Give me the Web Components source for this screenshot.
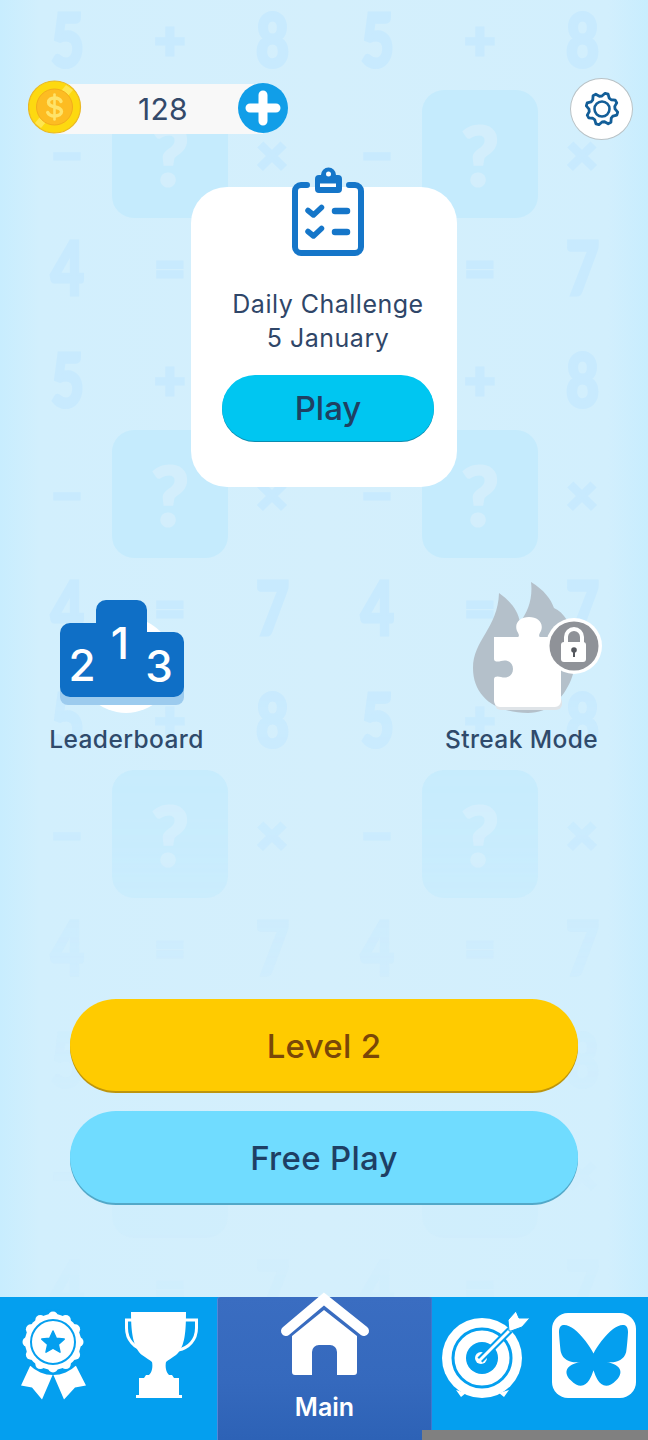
<!DOCTYPE html>
<html lang="en">
<head>
<meta charset="utf-8">
<title>Main</title>
<style>
  html, body { margin: 0; padding: 0; }
  body { width: 648px; height: 1440px; overflow: hidden; font-family: Inter, "Liberation Sans", sans-serif; }
</style>
</head>
<body>
<game-screen>
  <math-backdrop slot="backdrop"></math-backdrop>

  <top-bar>
    <coin-counter value="128"></coin-counter>
    <settings-button></settings-button>
  </top-bar>

  <daily-card title-text="Daily Challenge" date-text="5 January" action="Play">
    <svg width="76" height="92" viewBox="290 166 76 92" fill="none">
      <path d="M307 185h-6a6 6 0 0 0-6 6v56a6 6 0 0 0 6 6h54a6 6 0 0 0 6-6v-56a6 6 0 0 0-6-6h-6" stroke="#1576c9" stroke-width="6" stroke-linecap="round"/>
      <path d="M319 175a4 4 0 0 0-4 4v10a4 4 0 0 0 4 4h19a4 4 0 0 0 4-4v-10a4 4 0 0 0-4-4h-2a7.500 7.500 0 0 0-15 0z" fill="#1576c9"/>
      <circle cx="328.500" cy="174" r="2.500" fill="#fff"/>
      <rect x="320" y="183.500" width="16" height="3.500" fill="#fff"/>
      <path d="M308 210.500l5.500 4.500 8-7.500M308 231.500l5.500 4.500 8-7.500" stroke="#1576c9" stroke-width="5.500" stroke-linecap="round" stroke-linejoin="round"/>
      <path d="M335 211h12M335 232h12" stroke="#1576c9" stroke-width="6.500" stroke-linecap="round"/>
    </svg>
  </daily-card>

  <mode-row>
    <mode-tile label="Leaderboard">
      <svg width="154" height="135" viewBox="50 582 154 135" fill="none" style="overflow:visible">
        <circle cx="126" cy="665" r="48" fill="#fff"/>
        <rect x="60" y="680" width="124" height="25" rx="8" fill="#9ccbee"/>
        <path d="M60 633a10 10 0 0 1 10-10h26v-13a10 10 0 0 1 10-10h31a10 10 0 0 1 10 10v22h27a10 10 0 0 1 10 10v45a10 10 0 0 1-10 10H70a10 10 0 0 1-10-10z" fill="#0f6fc6"/>
        <text x="82" y="681" text-anchor="middle" font-family="Inter" font-size="44" font-weight="500" fill="#fff">2</text>
        <text x="120" y="659" text-anchor="middle" font-family="Inter" font-size="44" font-weight="500" fill="#fff">1</text>
        <text x="159" y="682" text-anchor="middle" font-family="Inter" font-size="44" font-weight="500" fill="#fff">3</text>
      </svg>
    </mode-tile>
    <mode-tile label="Streak Mode">
      <svg width="154" height="135" viewBox="444 582 154 135" fill="none" style="overflow:visible">
        <path d="M527 713C495 713 472 697 472 668C472 640 497 628 498 593C512 603 517 612 519 622C527 612 532 598 530 582C543 590 550 599 553 608C558 610 562 614 566 620C574 640 578 660 570 680C562 699 548 713 527 713Z" fill="#b4c0ca"/>
        <rect x="494" y="696" width="67" height="14" rx="6" fill="#dfe4e8"/>
        <path d="M493 637h23c3 0 2-3 0-6c-3-8 3-14 12-14s15 6 12 14c-2 3-3 6 0 6h20v64a6 6 0 0 1-6 6h-55a6 6 0 0 1-6-6V679c0-3 4-3 7-2c6 2 12-1 12-8s-6-10-12-8c-3 1-7 1-7-2z" fill="#fff"/>
        <circle cx="573" cy="646" r="28" fill="#fff"/>
        <circle cx="573" cy="646" r="24.500" fill="#8f9298"/>
        <path d="M565 643v-6a8 8 0 0 1 16 0v6" stroke="#fff" stroke-width="4"/>
        <rect x="560" y="642" width="25" height="20" rx="3" fill="#fff"/>
        <circle cx="573" cy="650" r="2.800" fill="#55585e"/>
        <rect x="572" y="650" width="2" height="7" fill="#55585e"/>
      </svg>
    </mode-tile>
  </mode-row>

  <button-stack>
    <pill-button tone="level">Level 2</pill-button>
    <pill-button tone="free">Free Play</pill-button>
  </button-stack>

  <nav-bar>
    <nav-tab>
      <svg width="108" height="143" viewBox="0 1297 108 143" fill="none">
        <path d="M31 1364L21 1385.500L32 1387.500L42 1399.500L53 1374zM75 1364L86 1385.500L75 1387.500L64 1399.500L53 1374z" fill="#fff"/>
        <circle cx="53" cy="1342" r="33" fill="#049fef"/>
        <g fill="#fff">
          <circle cx="53" cy="1342" r="28"/>
          <circle cx="53" cy="1316.500" r="5"/><circle cx="65.800" cy="1320" r="5"/><circle cx="75.100" cy="1329.300" r="5"/>
          <circle cx="78.500" cy="1342" r="5"/><circle cx="75.100" cy="1354.800" r="5"/><circle cx="65.800" cy="1364.100" r="5"/>
          <circle cx="53" cy="1367.500" r="5"/><circle cx="40.300" cy="1364.100" r="5"/><circle cx="30.900" cy="1354.800" r="5"/>
          <circle cx="27.500" cy="1342" r="5"/><circle cx="30.900" cy="1329.300" r="5"/><circle cx="40.300" cy="1320" r="5"/>
        </g>
        <circle cx="53" cy="1342" r="22" stroke="#049fef" stroke-width="2"/>
        <path d="M53 1331l3.300 7.300 7.900.8-5.900 5.300 1.700 7.800-7-4-7 4 1.700-7.800-5.900-5.300 7.900-.8z" fill="#049fef" stroke="#049fef" stroke-width="1.500" stroke-linejoin="round"/>
      </svg>
    </nav-tab>
    <nav-tab>
      <svg width="109" height="143" viewBox="108 1297 109 143" fill="none">
        <path d="M139 1320h-12.500v8c0 12 8 20 18 22M185 1320h11.500v8c0 12-8 20-18 22" stroke="#fff" stroke-width="3"/>
        <path d="M138 1312h48c0 24-2 36-10 43c-4 3-8 5-10 7c-1 5 0 10 3 13h3l2 3h5v17h3v3h-46v-3h3v-17h5l2-3h3c3-3 4-8 3-13c-2-2-6-4-10-7c-8-7-11-19-11-43z" fill="#fff"/>
      </svg>
    </nav-tab>
    <nav-tab active label="Main">
      <svg width="215" height="90" viewBox="217 1290 215 90" fill="none" style="overflow:visible">
        <path d="M292 1336L324 1310L357 1336V1372a3 3 0 0 1-3 3H337V1352a7 7 0 0 0-7-7H319a7 7 0 0 0-7 7V1375H295a3 3 0 0 1-3-3z" fill="#fff"/>
        <path d="M286 1331L324 1299L364 1331" stroke="#fff" stroke-width="10" stroke-linecap="round" stroke-linejoin="miter"/>
      </svg>
    </nav-tab>
    <nav-tab>
      <svg width="108" height="143" viewBox="432 1297 108 143" fill="none">
        <path d="M456 1390l5 7 5-4zM509 1390l-5 7-5-4z" fill="#fff"/>
        <circle cx="482" cy="1358" r="40" fill="#fff"/>
        <circle cx="482" cy="1358" r="29" stroke="#049fef" stroke-width="3"/>
        <circle cx="482" cy="1358" r="16" fill="#049fef"/>
        <circle cx="481" cy="1358" r="6" fill="#fff"/>
        <path d="M480 1360L510 1330" stroke="#049fef" stroke-width="7"/>
        <path d="M480 1360L511 1329" stroke="#fff" stroke-width="3" stroke-linecap="round"/>
        <path d="M509 1331L508 1320L516 1311L519 1318L530 1318L522 1327L511 1331z" fill="#fff" stroke="#049fef" stroke-width="1"/>
      </svg>
    </nav-tab>
    <nav-tab>
      <svg width="108" height="143" viewBox="540 1297 108 143" fill="none">
        <rect x="552" y="1313" width="84" height="85" rx="16" fill="#fff"/>
        <g transform="translate(559 1325) scale(0.1215)">
          <path d="M123.121 33.664C188.241 82.553 258.281 181.68 284 234.873c25.719-53.192 95.759-152.32 160.879-201.21C491.866-1.611 568-28.906 568 57.947c0 17.346-9.945 145.713-15.778 166.555-20.275 72.453-94.155 90.933-159.875 79.748C507.222 323.8 536.444 388.56 473.333 453.32c-119.86 122.992-172.272-30.859-185.702-70.281-2.462-7.227-3.614-10.608-3.631-7.733-.017-2.875-1.169.506-3.631 7.733-13.43 39.422-65.842 193.273-185.702 70.281-63.111-64.76-33.89-129.52 80.986-149.071-65.72 11.185-139.6-7.295-159.875-79.748C9.945 203.659 0 75.291 0 57.946 0-28.906 76.135-1.612 123.121 33.664Z" fill="#049fef"/>
        </g>
      </svg>
    </nav-tab>
  </nav-bar>
</game-screen>

<script>
// screen frame, everything stacks in a column
class GameScreen extends HTMLElement {
  constructor() {
    super();
    this.attachShadow({ mode: 'open' });
    this.shadowRoot.innerHTML = `
      <style>
        :host {
          display: flex;
          flex-direction: column;
          position: relative;
          width: 648px;
          height: 1440px;
          overflow: hidden;
          background: linear-gradient(90deg, #c8edfe 0, #d2effd 40px, #d4effc 50%, #d2effd 608px, #c8edfe 100%);
          color: #2b4263;
        }
      </style>
      <slot name="backdrop"></slot>
      <slot></slot>
    `;
  }
}

// faint tiled numbers behind the page
class MathBackdrop extends HTMLElement {
  constructor() {
    super();
    this.attachShadow({ mode: 'open' });
  }

  connectedCallback() {
    const rows = [['5', '+', '8'], ['−', '?', '×'], ['4', '=', '7']];
    // cells that sit fully under the card or the big buttons, nothing to see there
    const covered = new Set(['2:2', '2:3', '3:2', '3:3', '9:1', '9:2', '9:3', '9:4', '10:1', '10:2', '10:3', '10:4']);
    let cells = '';
    for (let r = 0; r < 12; r++) {
      const row = rows[r % 3];
      for (let col = 0; col < 6; col++) {
        const sign = row[col % 3];
        const text = covered.has(`${r}:${col}`) ? '' : sign;
        if (sign === '?') {
          cells += `<span class="card">${text}</span>`;
        } else {
          cells += `<span class="${/\d/.test(sign) ? 'num' : 'op'}">${text}</span>`;
        }
      }
    }
    const fade = 'linear-gradient(180deg, #000 0, #000 640px, rgba(0,0,0,.75) 850px, rgba(0,0,0,.4) 960px, rgba(0,0,0,.12) 1100px, rgba(0,0,0,.2) 1300px)';
    this.shadowRoot.innerHTML = `
      <style>
        :host {
          display: block;
          position: absolute;
          inset: 0;
          overflow: hidden;
          -webkit-mask-image: ${fade};
          mask-image: ${fade};
        }
        .grid {
          display: grid;
          grid-template-columns: repeat(2, 106px 100px 104px);
          grid-template-rows: repeat(4, 114px 115px 111px);
          margin: -18px 0 0 14px;
          place-items: center;
          font-family: Lato, "DejaVu Sans", sans-serif;
          font-weight: 900;
          color: #c8eafe;
          line-height: 1;
        }
        .num {
          font-size: 74px;
          line-height: 60px;
          transform: scaleX(.78);
          -webkit-text-stroke: 3px #c8eafe;
        }
        .op {
          font-size: 54px;
          -webkit-text-stroke: 3px #c8eafe;
        }
        .card {
          flex: none;
          width: 116px;
          height: 128px;
          border-radius: 22px;
          background: #c5ebfd;
          color: #d3eefc;
          font-size: 82px;
          -webkit-text-stroke: 2px #d3eefc;
          display: flex;
          align-items: center;
          justify-content: center;
        }
      </style>
      <div class="grid" aria-hidden="true">${cells}</div>
    `;
  }
}

class TopBar extends HTMLElement {
  constructor() {
    super();
    this.attachShadow({ mode: 'open' });
    this.shadowRoot.innerHTML = `
      <style>
        :host {
          display: flex;
          justify-content: space-between;
          align-items: center;
          position: relative;
          padding: 78px 15px 0 28px;
          height: 62px;
        }
      </style>
      <slot></slot>
    `;
  }
}

class CoinCounter extends HTMLElement {
  constructor() {
    super();
    this.attachShadow({ mode: 'open' });
  }

  connectedCallback() {
    this.shadowRoot.innerHTML = `
      <style>
        :host {
          display: block;
          width: 260px;
          height: 56px;
          position: relative;
          top: -2px;
        }
        .track {
          display: flex;
          align-items: center;
          justify-content: center;
          height: 50px;
          margin: 5px 25px 0 26px;
          padding-left: 9px;
          background: #f8f8f8;
          font-size: 30px;
          font-weight: 400;
          letter-spacing: 0.3px;
          color: #33496a;
        }
        svg { position: absolute; }
        .coin { left: 0; top: 0; }
        .plus { right: 0; top: 4px; }
      </style>
      <div class="track">${this.getAttribute('value') || '0'}</div>
      <svg class="coin" width="54" height="56" viewBox="0 0 54 56" fill="none">
        <circle cx="26.500" cy="28" r="26" fill="#fdd910" stroke="#eab824" stroke-width="1.200"/>
        <path d="M38 6L45 11L13 49L7 44z" fill="#ffe964" opacity=".75"/>
        <circle cx="26.500" cy="28" r="18" fill="#fdbc22" stroke="#f3ac1c"/>
        <path d="M33 22.500c-1-2.500-3.500-3.500-6.500-3.500c-3.500 0-6 1.800-6 4.500c0 6 13 3 13 9c0 2.800-3 4.500-7 4.500c-3 0-5.500-1-6.800-3.500" stroke="#fee36a" stroke-width="3.400" stroke-linecap="round"/>
        <path d="M26.500 15.500v25" stroke="#fee36a" stroke-width="2.600" stroke-linecap="round"/>
      </svg>
      <svg class="plus" width="50" height="50" viewBox="0 0 50 50" fill="none">
        <circle cx="25" cy="25" r="25" fill="#119ee8"/>
        <path d="M25 12v26M12 25h26" stroke="#fff" stroke-width="9" stroke-linecap="round"/>
      </svg>
    `;
  }
}

class SettingsButton extends HTMLElement {
  constructor() {
    super();
    this.attachShadow({ mode: 'open' });
  }

  // rounded eight tooth outline
  gearPath() {
    const cx = 22, cy = 22, teeth = 8;
    let d = '';
    for (let i = 0; i < teeth * 4; i++) {
      const a = (i / (teeth * 4)) * Math.PI * 2 + Math.PI / 8 - 0.2;
      const r = (i % 4 === 0 || i % 4 === 1) ? 16 : 13;
      d += `${i ? 'L' : 'M'}${(cx + r * Math.cos(a)).toFixed(2)} ${(cy + r * Math.sin(a)).toFixed(2)}`;
    }
    return d + 'Z';
  }

  connectedCallback() {
    this.shadowRoot.innerHTML = `
      <style>
        :host {
          display: flex;
          align-items: center;
          justify-content: center;
          box-sizing: border-box;
          width: 63px;
          height: 62px;
          border-radius: 50%;
          background: #fff;
          border: 1px solid #b9c2c6;
        }
      </style>
      <svg width="44" height="44" viewBox="0 0 44 44" fill="none">
        <path d="${this.gearPath()}" stroke="#135e98" stroke-width="2.800" stroke-linejoin="round"/>
        <circle cx="22" cy="22" r="7.500" stroke="#135e98" stroke-width="2.600"/>
      </svg>
    `;
  }
}

class DailyCard extends HTMLElement {
  constructor() {
    super();
    this.attachShadow({ mode: 'open' });
  }

  connectedCallback() {
    this.shadowRoot.innerHTML = `
      <style>
        :host {
          display: flex;
          flex-direction: column;
          align-items: center;
          box-sizing: border-box;
          position: relative;
          width: 266px;
          height: 300px;
          margin: 47px auto 0;
          padding-left: 8px;
          border-radius: 36px;
          background: #fff;
        }
        ::slotted(svg) { margin-top: -21px; display: block; }
        .title {
          margin-top: 29px;
          font-size: 25px;
          line-height: 34px;
          letter-spacing: 0.5px;
          text-align: center;
          white-space: nowrap;
          color: #2f4668;
        }
        .play {
          box-sizing: border-box;
          flex: none;
          width: 212px;
          height: 66px;
          margin-top: 20px;
          border-radius: 33px;
          background: #00c6f1;
          box-shadow: 0 1px 0 #0a8cb0;
          display: flex;
          align-items: center;
          justify-content: center;
          font-size: 33px;
          font-weight: 500;
          color: #1f4062;
        }
      </style>
      <slot></slot>
      <div class="title">${this.getAttribute('title-text')}<br>${this.getAttribute('date-text')}</div>
      <div class="play">${this.getAttribute('action')}</div>
    `;
  }
}

class ModeRow extends HTMLElement {
  constructor() {
    super();
    this.attachShadow({ mode: 'open' });
    this.shadowRoot.innerHTML = `
      <style>
        :host {
          display: flex;
          justify-content: space-between;
          position: relative;
          margin-top: 95px;
          padding: 0 49px;
        }
      </style>
      <slot></slot>
    `;
  }
}

class ModeTile extends HTMLElement {
  constructor() {
    super();
    this.attachShadow({ mode: 'open' });
  }

  connectedCallback() {
    this.shadowRoot.innerHTML = `
      <style>
        :host {
          display: flex;
          flex-direction: column;
          align-items: center;
          width: 155px;
        }
        ::slotted(svg) { display: block; }
        .label {
          margin-top: 7px;
          font-size: 24.500px;
          font-weight: 500;
          line-height: 30px;
          letter-spacing: 0.4px;
          white-space: nowrap;
          color: #2f4a6b;
        }
      </style>
      <slot></slot>
      <div class="label">${this.getAttribute('label')}</div>
    `;
  }
}

class ButtonStack extends HTMLElement {
  constructor() {
    super();
    this.attachShadow({ mode: 'open' });
    this.shadowRoot.innerHTML = `
      <style>
        :host {
          display: flex;
          flex-direction: column;
          gap: 20px;
          position: relative;
          margin-top: auto;
          padding: 0 70px 94px;
        }
      </style>
      <slot></slot>
    `;
  }
}

class PillButton extends HTMLElement {
  constructor() {
    super();
    this.attachShadow({ mode: 'open' });
    this.shadowRoot.innerHTML = `
      <style>
        :host {
          display: flex;
          align-items: center;
          justify-content: center;
          box-sizing: border-box;
          height: 92px;
          padding-top: 2px;
          border-radius: 46px;
          font-size: 33px;
          font-weight: 500;
          letter-spacing: 0.3px;
        }
        :host([tone="level"]) {
          background: #ffcb00;
          box-shadow: 0 2px 0 #bd950d;
          color: #7a4708;
        }
        :host([tone="free"]) {
          background: #70dcff;
          box-shadow: 0 2px 0 #52a8c8;
          color: #1e3f64;
        }
      </style>
      <slot></slot>
    `;
  }
}

class NavBar extends HTMLElement {
  constructor() {
    super();
    this.attachShadow({ mode: 'open' });
    this.shadowRoot.innerHTML = `
      <style>
        :host {
          display: grid;
          grid-template-columns: 108px 109px 215px 108px 108px;
          position: relative;
          height: 143px;
          background: #049fef;
        }
        /* grey sliver over the lower edge */
        :host::after {
          content: '';
          position: absolute;
          left: 422px;
          right: 0;
          bottom: 0;
          height: 10px;
          background: #808080;
        }
      </style>
      <slot></slot>
    `;
  }
}

class NavTab extends HTMLElement {
  constructor() {
    super();
    this.attachShadow({ mode: 'open' });
  }

  connectedCallback() {
    const label = this.getAttribute('label');
    this.shadowRoot.innerHTML = `
      <style>
        :host {
          display: flex;
          flex-direction: column;
          align-items: center;
          min-width: 0;
        }
        :host([active]) {
          border-radius: 3px 3px 0 0;
          background: linear-gradient(180deg, #3a6dc1 0, #3569bd 60%, #2d62b6 100%);
          box-shadow: inset 1px 0 0 #5288da, inset -1px 0 0 #3f78cf;
        }
        ::slotted(svg) { display: block; flex: none; }
        :host([active]) ::slotted(svg) { margin-top: -7px; }
        .label {
          margin-top: 12px;
          font-size: 25px;
          line-height: 30px;
          font-weight: 600;
          color: #fff;
        }
      </style>
      <slot></slot>
      ${label ? `<div class="label">${label}</div>` : ''}
    `;
  }
}

customElements.define('game-screen', GameScreen);
customElements.define('math-backdrop', MathBackdrop);
customElements.define('top-bar', TopBar);
customElements.define('coin-counter', CoinCounter);
customElements.define('settings-button', SettingsButton);
customElements.define('daily-card', DailyCard);
customElements.define('mode-row', ModeRow);
customElements.define('mode-tile', ModeTile);
customElements.define('button-stack', ButtonStack);
customElements.define('pill-button', PillButton);
customElements.define('nav-bar', NavBar);
customElements.define('nav-tab', NavTab);
</script>
</body>
</html>
